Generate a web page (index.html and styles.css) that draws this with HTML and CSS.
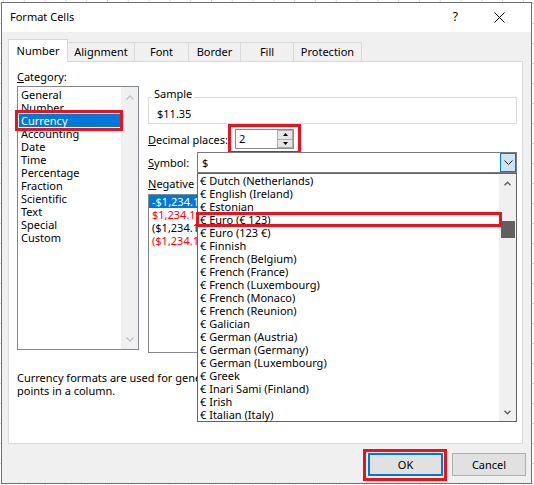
FILE: index.html
```html
<!DOCTYPE html>
<html>
<head>
<meta charset="utf-8">
<title>Format Cells</title>
<link rel="stylesheet" href="styles.css">
</head>
<body>
<div class="dialog">
  <div class="titlebar">
    <span class="title">Format Cells</span>
    <span class="help">?</span>
    <svg class="close" width="11" height="11" viewBox="0 0 11 11"><path d="M0.5 0.5 L10.5 10.5 M10.5 0.5 L0.5 10.5" stroke="#000" stroke-width="1" fill="none"/></svg>
  </div>
  <div class="body">
    <div class="tabs">
      <div class="tab active t-number">Number</div>
      <div class="tab t-align">Alignment</div>
      <div class="tab t-font">Font</div>
      <div class="tab t-border">Border</div>
      <div class="tab t-fill">Fill</div>
      <div class="tab t-prot">Protection</div>
    </div>
    <div class="panel">
      <div class="cols">
        <div class="left">
          <div class="label"><u>C</u>ategory:</div>
          <div class="listbox cat">
            <div class="items">
              <div class="item">General</div>
              <div class="item">Number</div>
              <div class="item sel marked">Currency</div>
              <div class="item">Accounting</div>
              <div class="item">Date</div>
              <div class="item">Time</div>
              <div class="item">Percentage</div>
              <div class="item">Fraction</div>
              <div class="item">Scientific</div>
              <div class="item">Text</div>
              <div class="item">Special</div>
              <div class="item">Custom</div>
            </div>
            <div class="vscroll cat-scroll">
              <svg class="cs-up" width="8" height="5" viewBox="0 0 8 5"><path d="M0.5 4.5 L4 1 L7.5 4.5" fill="none" stroke="#c4c4c4" stroke-width="1.4"/></svg>
              <svg class="cs-down" width="8" height="5" viewBox="0 0 8 5"><path d="M0.5 0.5 L4 4 L7.5 0.5" fill="none" stroke="#c4c4c4" stroke-width="1.4"/></svg>
            </div>
          </div>
        </div>
        <div class="right">
          <fieldset class="sample">
            <legend>Sample</legend>
            <div class="sample-val">$11.35</div>
          </fieldset>
          <div class="row dec">
            <span class="lbl lbl-dec"><u>D</u>ecimal places:</span>
            <div class="spin">
              <span class="spin-val">2</span>
              <div class="spin-btns">
                <span class="sb"><svg width="5" height="3" viewBox="0 0 5 3"><path d="M0 3 L2.5 0 L5 3 Z" fill="#000"/></svg></span>
                <span class="sb"><svg width="5" height="3" viewBox="0 0 5 3"><path d="M0 0 L2.5 3 L5 0 Z" fill="#000"/></svg></span>
              </div>
            </div>
          </div>
          <div class="row sym">
            <span class="lbl lbl-sym"><u>S</u>ymbol:</span>
            <div class="combo">
              <span class="combo-val">$</span>
              <span class="combo-btn"><svg width="9" height="5" viewBox="0 0 9 5"><path d="M0.5 0.5 L4.5 4.5 L8.5 0.5" fill="none" stroke="#1f1f1f" stroke-width="1"/></svg></span>
              <div class="dropdown">
                <div class="items">
                  <div class="item">€ Dutch (Netherlands)</div>
                  <div class="item">€ English (Ireland)</div>
                  <div class="item">€ Estonian</div>
                  <div class="item marked-euro">€ Euro (€ 123)</div>
                  <div class="item">€ Euro (123 €)</div>
                  <div class="item">€ Finnish</div>
                  <div class="item">€ French (Belgium)</div>
                  <div class="item">€ French (France)</div>
                  <div class="item">€ French (Luxembourg)</div>
                  <div class="item">€ French (Monaco)</div>
                  <div class="item">€ French (Reunion)</div>
                  <div class="item">€ Galician</div>
                  <div class="item">€ German (Austria)</div>
                  <div class="item">€ German (Germany)</div>
                  <div class="item">€ German (Luxembourg)</div>
                  <div class="item">€ Greek</div>
                  <div class="item">€ Inari Sami (Finland)</div>
                  <div class="item">€ Irish</div>
                  <div class="item">€ Italian (Italy)</div>
                </div>
                <div class="vscroll dd-scroll">
                  <svg class="dd-up" width="7" height="5" viewBox="0 0 7 5"><path d="M0.5 4.3 L3.5 1.2 L6.5 4.3" fill="none" stroke="#606060" stroke-width="1.4"/></svg>
                  <div class="thumb"></div>
                  <svg class="dd-down" width="7" height="5" viewBox="0 0 7 5"><path d="M0.5 0.7 L3.5 3.8 L6.5 0.7" fill="none" stroke="#606060" stroke-width="1.4"/></svg>
                </div>
              </div>
            </div>
          </div>
          <div class="label neg-label"><u>N</u>egative numbers:</div>
          <div class="listbox neg">
            <div class="items">
              <div class="item sel">-$1,234.10</div>
              <div class="item red">$1,234.10</div>
              <div class="item">($1,234.10)</div>
              <div class="item red">($1,234.10)</div>
            </div>
          </div>
        </div>
      </div>
      <p class="desc">Currency formats are used for general monetary values. Use Accounting formats to align decimal<br>points in a column.</p>
    </div>
    <div class="buttons">
      <button class="btn ok">OK</button>
      <button class="btn cancel">Cancel</button>
    </div>
  </div>
</div>
</body>
</html>
```
FILE: styles.css
```css
body {
  margin: 0;
  width: 534px;
  height: 485px;
  overflow: hidden;
  background-color: #fff;
  background-image:
    linear-gradient(to bottom, #dadada 1px, transparent 1px),
    linear-gradient(to right, #dadada 1px, transparent 1px);
  background-size: 20.8px 20px;
  background-position: 3px 3px;
  font-family: "Noto Sans", "Segoe UI", sans-serif;
  font-size: 11px;
  color: #000;
}

.dialog {
  box-sizing: border-box;
  width: 531px;
  height: 482px;
  margin: 2px 0 0 1px;
  border: 1px solid #707070;
  background: #f0f0f0;
  display: flex;
  flex-direction: column;
}

.titlebar {
  flex: none;
  height: 29px;
  background: #fff;
  display: flex;
  align-items: center;
  padding-left: 8px;
  line-height: 13px;
}
.title { padding-bottom: 2px; }
.help { margin-left: auto; font-size: 12px; padding-bottom: 2px; }
.close { margin: 0 26px 0 36px; }

.body {
  flex: 1;
  padding: 7px 0 0 6px;
}

.tabs {
  display: flex;
  align-items: flex-end;
  height: 22px;
}
.tab {
  box-sizing: border-box;
  height: 19px;
  border: 1px solid #d9d9d9;
  border-bottom: 0;
  margin-left: -1px;
  text-align: center;
  line-height: 18px;
  background: #f0f0f0;
}
.tab:first-child { margin-left: 0; }
.tab.active {
  height: 23px;
  margin-bottom: -1px;
  padding-top: 2px;
  background: #fff;
  position: relative;
  z-index: 1;
}
.t-number { width: 60px; }
.t-align { width: 68px; }
.t-font { width: 55px; }
.t-border { width: 53px; }
.t-fill { width: 54px; }
.t-prot { width: 69px; }

.panel {
  box-sizing: border-box;
  width: 515px;
  height: 383px;
  border: 1px solid #d9d9d9;
  background: #fff;
  padding: 8px 0 0 8px;
  overflow: hidden;
}

.cols {
  display: grid;
  grid-template-columns: 122px 369px;
  column-gap: 9px;
  align-items: start;
}

.label { line-height: 13px; height: 13px; white-space: nowrap; }

.listbox {
  box-sizing: border-box;
  border: 1px solid #828790;
  background: #fff;
  display: flex;
}
.items { flex: 1; min-width: 0; }
.item {
  height: 13px;
  line-height: 13px;
  padding-left: 2px;
  white-space: nowrap;
}
.item.sel { background: #0078d7; color: #fff; }
.red { color: #ff0000; }

.cat { height: 264px; margin-top: 3px; }
.cat .items { padding: 1px 0 0 1px; }

.marked { position: relative; }
.marked::after {
  content: "";
  position: absolute;
  left: -4px;
  right: -2px;
  top: -4px;
  bottom: -4px;
  border: 3px solid #e6141e;
}

.vscroll {
  flex: none;
  width: 17px;
  background: #f0f0f0;
  display: flex;
  flex-direction: column;
  align-items: center;
}
.cs-up { margin-top: 8px; }
.cs-down { margin-top: auto; margin-bottom: 7px; }

.sample {
  margin: 17px 0 0;
  padding: 0 0 3px 8px;
  border: 1px solid #dcdcdc;
  min-width: 0;
}
.sample legend {
  line-height: 13px;
  padding: 0 2px 7px;
  margin-left: -5px;
}
.sample-val { line-height: 13px; }

.row { display: flex; align-items: center; }
.lbl { white-space: nowrap; flex: none; }
.dec { margin-top: 5px; }
.lbl-dec { width: 80px; }
.spin {
  position: relative;
  box-sizing: border-box;
  width: 59px;
  height: 20px;
  margin-left: 7px;
  border: 1px solid #8c8c8c;
  background: #fff;
  display: flex;
}
.spin::after {
  content: "";
  position: absolute;
  left: -8px;
  right: -8px;
  top: -6px;
  bottom: -6px;
  border: 3px solid #e6141e;
}
.spin-val { flex: 1; padding-left: 3px; line-height: 18px; }
.spin-btns { width: 16px; display: flex; flex-direction: column; }
.sb {
  flex: 1;
  box-sizing: border-box;
  border: 1px solid #adadad;
  background: #e5e5e5;
  display: flex;
  align-items: center;
  justify-content: center;
}
.sb + .sb { border-top: 0; }

.sym { margin-top: 3px; }
.lbl-sym { width: 49px; }
.combo {
  position: relative;
  box-sizing: border-box;
  width: 320px;
  height: 21px;
  border: 1px solid #7a7a7a;
  background: #fff;
  display: flex;
}
.combo-val { flex: 1; padding-left: 4px; line-height: 19px; }
.combo-btn {
  box-sizing: border-box;
  width: 16px;
  border: 1px solid #0078d7;
  background: #cce4f7;
  display: flex;
  align-items: center;
  justify-content: center;
}

.dropdown {
  position: absolute;
  top: 20px;
  left: -1px;
  width: 320px;
  height: 249px;
  box-sizing: border-box;
  border: 1px solid #646464;
  background: #fff;
  display: flex;
  z-index: 5;
}
.marked-euro { position: relative; }
.marked-euro::after {
  content: "";
  position: absolute;
  left: -2px;
  right: -3px;
  top: -1px;
  bottom: -1px;
  border: 3px solid #e6141e;
  z-index: 2;
}
.dd-up { margin-top: 7px; flex: none; }
.thumb {
  align-self: stretch;
  height: 17px;
  margin: 35px 1px 0 2px;
  background: #606060;
}
.dd-down { margin-top: auto; margin-bottom: 6px; flex: none; }

.neg-label { margin-top: 4px; }
.neg { height: 159px; margin-top: 4px; overflow: hidden; }
.neg .item { padding-left: 3px; }

.desc {
  margin: 18px 0 0;
  width: 480px;
  overflow: hidden;
  line-height: 13px;
  white-space: nowrap;
}

.buttons {
  display: flex;
  justify-content: flex-end;
  gap: 9px;
  margin-top: 9px;
  padding-right: 5px;
}
.btn {
  box-sizing: border-box;
  height: 23px;
  width: 74px;
  padding: 0;
  border: 1px solid #adadad;
  background: #e1e1e1;
  font: inherit;
  color: #000;
}
.ok {
  width: 75px;
  border: 2px solid #0078d7;
  position: relative;
}
.ok::after {
  content: "";
  position: absolute;
  left: -7px;
  right: -6px;
  top: -6px;
  bottom: -7px;
  border: 3px solid #e6141e;
}
```
